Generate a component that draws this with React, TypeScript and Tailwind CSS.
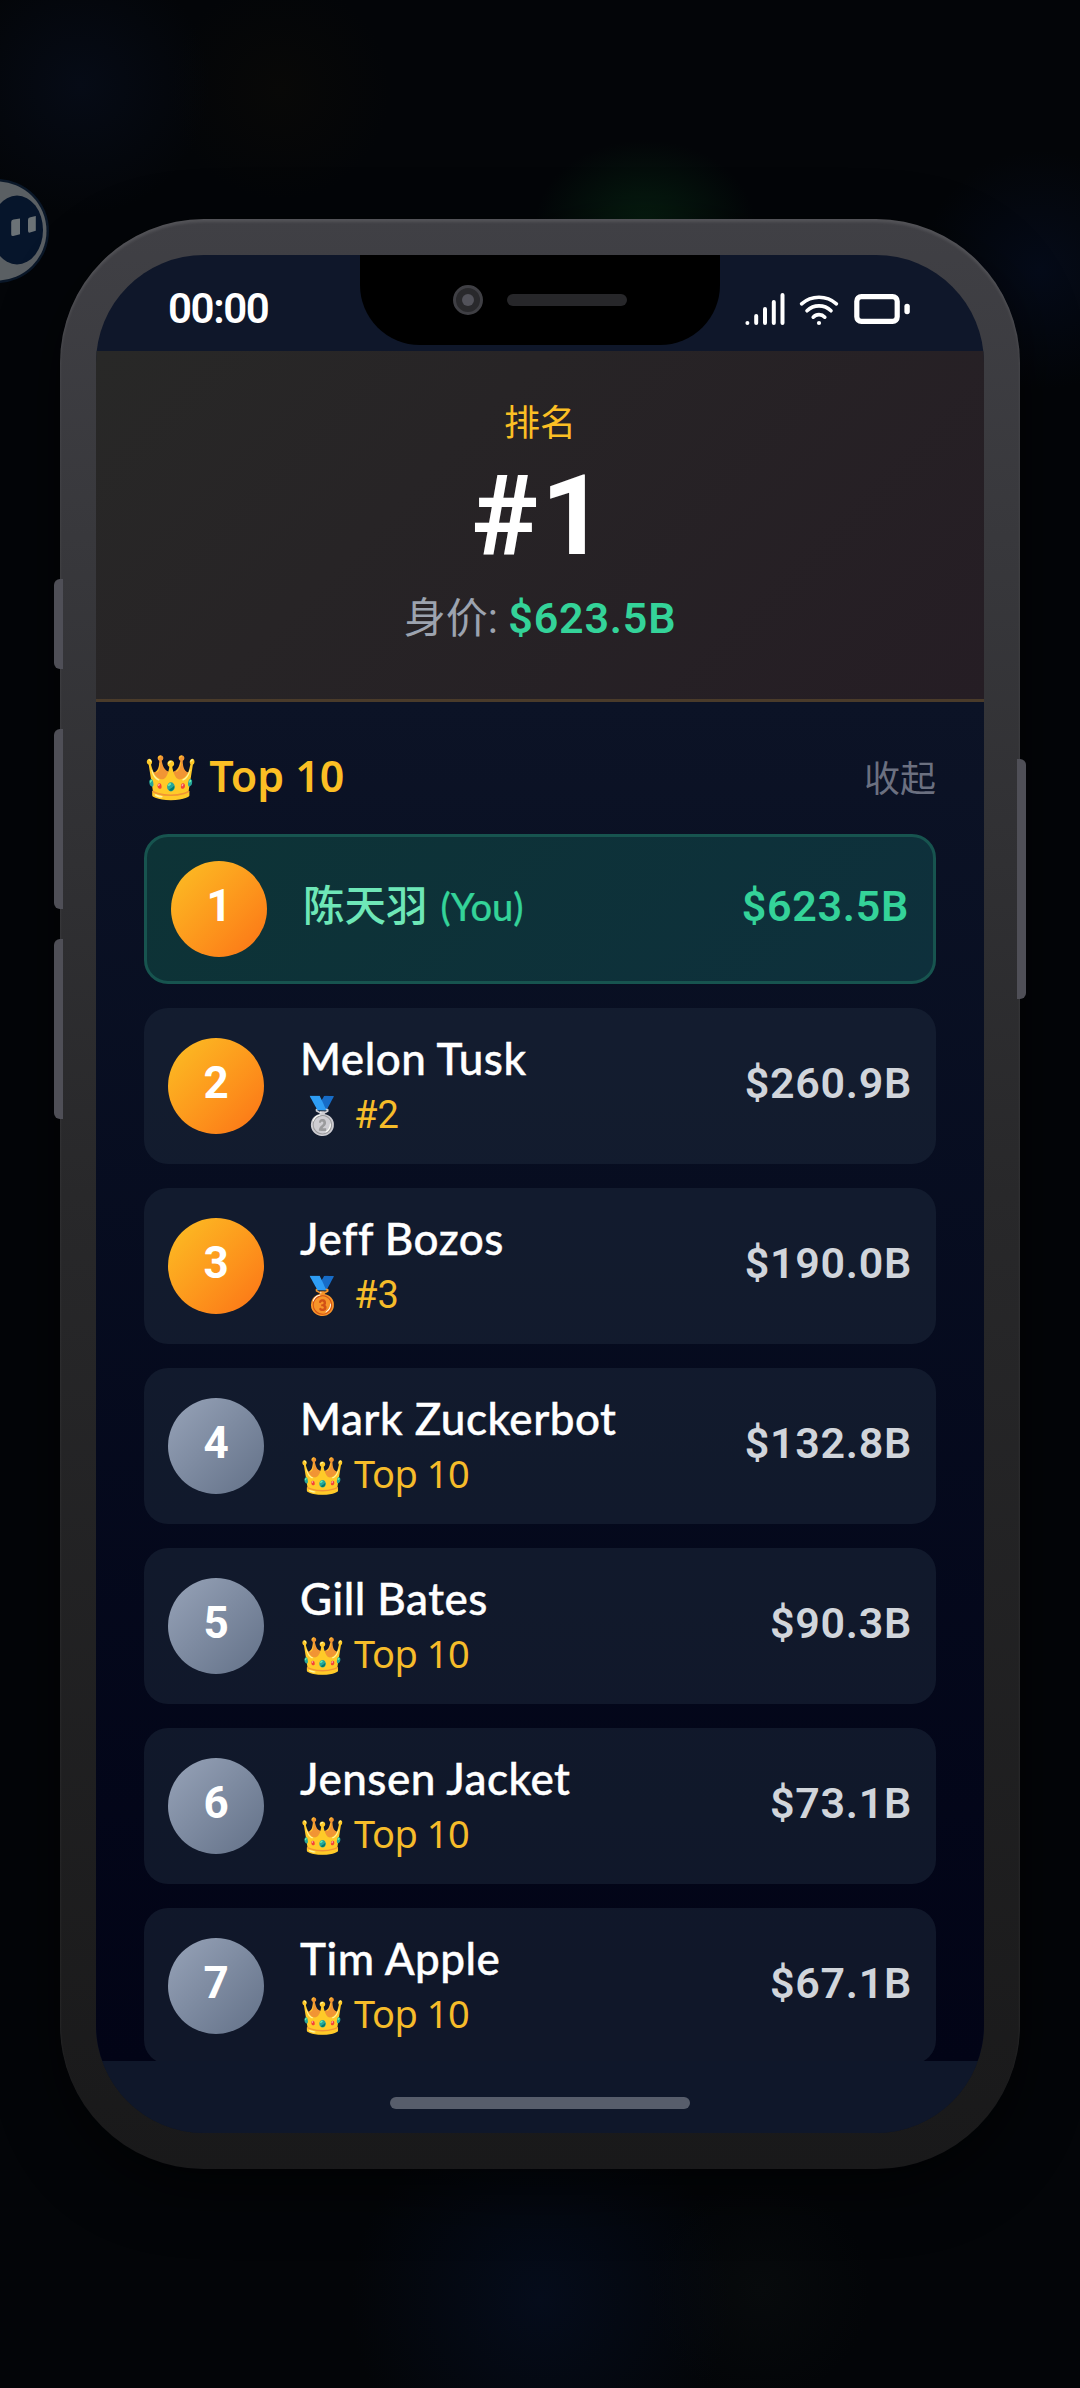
import React from 'react';
import clsx from 'clsx';

interface Tycoon {
  rank: number;
  name: string;
  worth: string;
  medal?: string;
  isYou?: boolean;
}

const tycoons: Tycoon[] = [
  { rank: 1, name: '陈天羽', worth: '$623.5B', isYou: true },
  { rank: 2, name: 'Melon Tusk', worth: '$260.9B', medal: '🥈' },
  { rank: 3, name: 'Jeff Bozos', worth: '$190.0B', medal: '🥉' },
  { rank: 4, name: 'Mark Zuckerbot', worth: '$132.8B' },
  { rank: 5, name: 'Gill Bates', worth: '$90.3B' },
  { rank: 6, name: 'Jensen Jacket', worth: '$73.1B' },
  { rank: 7, name: 'Tim Apple', worth: '$67.1B' },
];

const StatusIcons = () => (
  <div className="flex items-center text-white">
    <svg width="40" height="36" viewBox="0 0 40 36" fill="none" stroke="currentColor" strokeWidth="4" strokeLinecap="round">
      <path d="M2.4 32v.01M11.2 25v7M20 18v14M28.8 11v21M37.5 4v28" />
    </svg>
    <svg className="ml-[14px]" width="40" height="36" viewBox="0 0 40 36" fill="none" stroke="currentColor" strokeWidth="3.6" strokeLinecap="round">
      <path d="M2.6 12.8C12.4 4 27.6 4 37.4 12.8M8 19.8c6.8-6.6 17.2-6.6 24 0M14.2 26.2c3.2-3.4 8.4-3.4 11.6 0" />
      <circle cx="20" cy="32" r="2.1" fill="currentColor" stroke="none" />
    </svg>
    <svg className="ml-[15px]" width="58" height="36" viewBox="0 0 58 36" fill="none">
      <rect x="2.8" y="5.6" width="40.4" height="24.8" rx="4.6" stroke="currentColor" strokeWidth="5.2" />
      <rect x="50.4" y="12.8" width="5.4" height="10.4" rx="2.6" fill="currentColor" />
    </svg>
  </div>
);

const Notch = () => (
  <div className="absolute left-1/2 top-0 flex h-[90px] w-[360px] -translate-x-1/2 items-center justify-center gap-6 rounded-b-[60px] bg-black">
    <div className="flex h-[30px] w-[30px] items-center justify-center rounded-full border-[3px] border-[#3f3f44] bg-[#29292c]">
      <div className="h-3 w-3 rounded-full bg-[#52525a]" />
    </div>
    <div className="h-3 w-[120px] rounded-full bg-[#27272a]" />
  </div>
);

// Floating assistant head, half hidden behind the screen edge
const FloatingHead = () => (
  <svg className="absolute left-0 top-[170px]" width="60" height="120" viewBox="0 0 60 120">
    <circle cx="-3" cy="61" r="52" fill="#0a1728" />
    <circle cx="-3" cy="61" r="49.5" fill="#5a5f63" />
    <ellipse cx="17" cy="60" rx="26" ry="34.5" fill="#06152b" />
    <path d="M13.5 49.6l6.5-1v15.6l-6.8 1.8q-2 .3-2-1.8V52q0-2.2 2.3-2.4z" fill="#6b7276" />
    <path d="M30.4 47.2l5.4-1.2v14.8l-5.8 1.8q-2 .3-2-1.8V49.8q0-2.3 2.4-2.6z" fill="#6b7276" />
  </svg>
);

const RankBadge = ({ rank }: { rank: number }) => (
  <div
    className={clsx(
      "flex h-24 w-24 shrink-0 items-center justify-center rounded-full bg-linear-135 pb-[6px] font-['Roboto',sans-serif] text-[44px] font-bold leading-none text-white",
      rank <= 3 ? 'from-[#fbbf24] to-[#fb7116]' : 'from-[#97a3b8] to-[#637188]'
    )}
  >
    {rank}
  </div>
);

const TycoonRow = ({ tycoon }: { tycoon: Tycoon }) => {
  const { rank, name, worth, medal, isYou } = tycoon;

  return (
    <div
      className={clsx(
        'flex shrink-0 items-center rounded-3xl px-6',
        isYou
          ? 'h-[150px] border-[3px] border-[#17544f] bg-linear-135 from-[#0d3336] to-[#0e303c]'
          : 'h-[156px] bg-[#1e293b]/50'
      )}
    >
      <RankBadge rank={rank} />

      {isYou ? (
        <div className="ml-9 flex-1 pb-[7px] text-[41.5px] font-medium leading-[60px] text-[#6ee7b7]">
          {name}
          <span className="ml-[13px] font-['Lato',sans-serif] text-[38px] font-medium text-[#34d399] [-webkit-text-stroke:0.2px_currentColor]">(You)</span>
        </div>
      ) : (
        <div className="ml-9 flex-1 pb-[7px]">
          <div className="font-['Lato',sans-serif] text-[44px] font-medium leading-[60px] tracking-[0.5px] text-white [-webkit-text-stroke:0.4px_currentColor]">{name}</div>
          <div className="flex h-[50px] items-baseline text-[#f6bc2a]">
            <span className="w-[54px] text-[36px] leading-[50px]">{medal ?? '👑'}</span>
            {medal ? (
              <span className="font-['Roboto',sans-serif] text-[38px] leading-[54px]">#{rank}</span>
            ) : (
              <span className="text-[38px] leading-[50px] tracking-[-0.5px]">Top 10</span>
            )}
          </div>
        </div>
      )}

      <div
        className={clsx(
          "pb-[7px] font-['Roboto',sans-serif] text-[43px] font-semibold leading-[60px] tracking-[0.7px]",
          isYou ? 'text-[#34d399]' : 'text-[#d1d5db]'
        )}
      >
        {worth}
      </div>
    </div>
  );
};

const App: React.FC = () => {
  return (
    <div className="relative flex h-[2388px] w-[1080px] flex-col items-center overflow-hidden bg-[#030508] bg-[radial-gradient(ellipse_110px_85px_at_645px_225px,#061e10_0,transparent_100%),radial-gradient(circle_at_80px_85px,#060b16_0,transparent_130px),radial-gradient(circle_at_1040px_270px,#050b19_0,transparent_120px),radial-gradient(circle_at_540px_2300px,#050c1b_0,transparent_190px),radial-gradient(circle_at_280px_90px,#080807_0,transparent_110px),radial-gradient(circle_at_760px_2290px,#070a0c_0,transparent_110px)] font-['Noto_Sans','Noto_Sans_CJK_SC',sans-serif]">
      <FloatingHead />

      <div className="relative mt-[219px] flex h-[1950px] w-[960px] shrink-0 flex-col rounded-[144px] bg-linear-to-b from-[#404045] via-[#28282a] to-[#19191a] p-9 shadow-[inset_0_3px_3px_rgba(255,255,255,0.1),0_20px_60px_rgba(0,0,0,0.6)]">
        {/* Side buttons */}
        <div className="absolute -left-1.5 top-[360px] h-[90px] w-[9px] rounded-l-md bg-[#4f4f57]" />
        <div className="absolute -left-1.5 top-[510px] h-[180px] w-[9px] rounded-l-md bg-[#4f4f57]" />
        <div className="absolute -left-1.5 top-[720px] h-[180px] w-[9px] rounded-l-md bg-[#4f4f57]" />
        <div className="absolute -right-1.5 top-[540px] h-[240px] w-[9px] rounded-r-md bg-[#4f4f57]" />

        <div className="relative flex flex-1 flex-col overflow-hidden rounded-[108px] bg-[#0f172a]">
          <div className="flex h-24 shrink-0 items-center justify-between px-[72px] pt-3">
            <span className="font-['Roboto',sans-serif] text-[42px] font-semibold leading-none tracking-[-1.4px] text-white">00:00</span>
            <StatusIcons />
          </div>
          <Notch />

          <div className="flex h-[351px] shrink-0 flex-col items-center border-b-[3px] border-[#4a3b2a] bg-linear-135 from-[#282827] to-[#251d24] pt-[45px]">
            <div className="text-[36px] leading-[54px] text-[#fbbf24]">排名</div>
            <div className="mt-3 font-['Roboto',sans-serif] text-[112px] font-bold leading-[108px] tracking-[3px] text-white">#1</div>
            <div className="mt-[17px] font-['Roboto','Noto_Sans_CJK_SC',sans-serif] text-[42px] leading-[63px] text-[#9ca3af]">
              身价:{' '}
              <span className="text-[43px] font-semibold tracking-[0.8px] text-[#34d399]">$623.5B</span>
            </div>
          </div>

          <div className="flex min-h-0 flex-1 flex-col overflow-hidden bg-linear-to-b from-[#0c1326] to-[#020416] px-12 pt-[42px]">
            <div className="mb-[27px] flex h-[63px] shrink-0 items-baseline justify-between leading-[63px]">
              <h2 className="text-[43px] font-semibold text-[#fbbf24]">👑 Top 10</h2>
              <button className="text-[36px] leading-[63px] text-[#6b7080]">收起</button>
            </div>
            <div className="flex flex-col gap-6">
              {tycoons.map((tycoon) => (
                <TycoonRow key={tycoon.rank} tycoon={tycoon} />
              ))}
            </div>
          </div>

          <div className="flex h-[72px] shrink-0 items-center justify-center bg-[#0f172a] pt-3">
            <div className="h-3 w-[300px] rounded-full bg-[#575d6b]" />
          </div>
        </div>
      </div>
    </div>
  );
};

export default App;
